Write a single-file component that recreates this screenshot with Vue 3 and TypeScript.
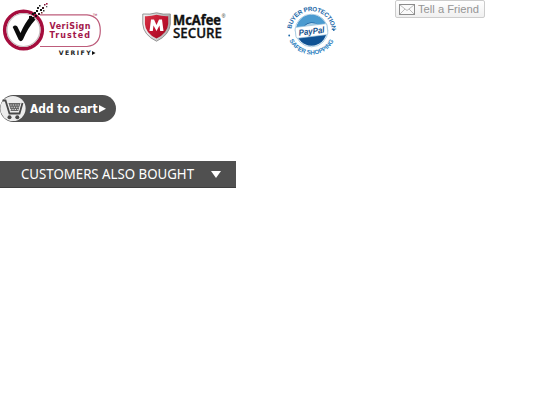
<script setup lang="ts">
const cartLabel = 'Add to cart'
const sectionTitle = 'CUSTOMERS ALSO BOUGHT'
// Pixel fragments breaking off the end of the check mark
const fragments: { x: number; y: number; s: number; c: string }[] = [
  { x: 29, y: 16, s: 3, c: '#111' },
  { x: 32, y: 13, s: 2, c: '#111' },
  { x: 35, y: 15, s: 2, c: '#111' },
  { x: 32, y: 17, s: 2.5, c: '#111' },
  { x: 34, y: 12, s: 2, c: '#111' },
  { x: 36, y: 10, s: 2, c: '#111' },
  { x: 38, y: 13, s: 2, c: '#222' },
  { x: 37, y: 7, s: 2, c: '#222' },
  { x: 40, y: 9, s: 2, c: '#111' },
  { x: 39, y: 5, s: 1.5, c: '#222' },
  { x: 42, y: 7, s: 2, c: '#3a1620' },
  { x: 43, y: 10, s: 1.5, c: '#333' },
  { x: 44, y: 4, s: 1.5, c: '#7a1435' },
  { x: 46, y: 6, s: 1.3, c: '#555' },
  { x: 46, y: 3, s: 1.6, c: '#a52048' },
  { x: 41, y: 12, s: 1.5, c: '#622' },
]
</script>

<template>
  <main class="page">
    <header class="badges">
      <svg class="verisign" width="110" height="62" viewBox="0 0 110 62">
        <path d="M40 14.800H87Q100.300 16 100.300 30.500Q100.300 45 87 46.500H40" fill="#fff" stroke="#bd5c7b" stroke-width="1.200" />
        <circle cx="23.500" cy="30" r="18.800" fill="#fff" stroke="#a50d3d" stroke-width="3.600" />
        <circle cx="23.500" cy="30" r="16.500" fill="none" stroke="#c9bfc2" stroke-width="1.200" />
        <path d="M12.700 27Q15 24.500 17.300 26.500L20.500 33Q24.500 23.500 30 17L35.500 19.500Q28 27.500 23 39.500Q21 42.500 18.800 40Z" fill="#0b0b0b" />
        <rect v-for="(f, i) in fragments" :key="i" :x="f.x" :y="f.y" :width="f.s" :height="f.s" :fill="f.c" />
        <text class="vs" x="49.500" y="29.300" textLength="41">VeriSign</text>
        <text class="vs" x="49.500" y="38.300" textLength="40.500">Trusted</text>
        <text class="tm" x="92.500" y="17">™</text>
        <text class="verify" x="58.700" y="55.300" textLength="32">VERIFY</text>
        <path d="M92 51L95.500 53L92 55Z" fill="#111" />
      </svg>

      <svg class="mcafee" width="90" height="50" viewBox="0 0 90 50">
        <defs>
          <linearGradient id="shield" x1="0" y1="0" x2="1" y2="1">
            <stop offset="0" stop-color="#d83445" />
            <stop offset=".5" stop-color="#c01430" />
            <stop offset="1" stop-color="#a00b20" />
          </linearGradient>
          <linearGradient id="rim" x1="0" y1="0" x2="1" y2="0">
            <stop offset="0" stop-color="#f4f4f4" />
            <stop offset="1" stop-color="#aaa" />
          </linearGradient>
        </defs>
        <path d="M.8 14Q8 14.800 14.500 12.800Q21 14.800 28.300 14V24Q27.500 35 14.500 41.200Q1.500 35 .8 24Z" fill="url(#rim)" stroke="#8a8a8a" stroke-width=".9" />
        <path d="M2.900 16.200Q9 16.500 14.500 14.800Q20 16.500 26.200 16.200V24Q25.500 33.300 14.500 38.500Q3.500 33.300 2.900 24Z" fill="url(#shield)" />
        <path d="M7.500 31L9 19.500H12L14.500 25L17 19.500H20L21.500 31H18.200L17.500 25.500L14.500 31L11.500 25.500L10.800 31Z" fill="#fff" />
        <text class="mc" x="31" y="24.500" textLength="48" lengthAdjust="spacingAndGlyphs">McAfee</text>
        <text class="reg" x="79.800" y="18">®</text>
        <text class="secure" x="31" y="37.800" textLength="49" lengthAdjust="spacingAndGlyphs">SECURE</text>
      </svg>

      <svg class="paypal" width="60" height="60" viewBox="0 0 60 60">
        <defs>
          <path id="upper" d="M5.300 30A20.300 20.300 0 0 1 45.800 30" />
          <path id="lower" d="M3 39.500A24.700 24.700 0 0 0 48.500 39.500" />
        </defs>
        <circle cx="25.500" cy="30.500" r="16.300" fill="#fff" stroke="#8fbcd9" stroke-width=".8" />
        <circle cx="25.500" cy="30.500" r="15.200" fill="#0f5294" />
        <path d="M10.300 31A15.200 15.200 0 0 1 40.700 29L34 28A9 9 0 0 0 17 29Z" fill="#4b9bd0" />
        <path d="M18 27A9 8 0 0 1 33 26Z" fill="#a9d1ea" />
        <g transform="rotate(-7 25.500 31)">
          <rect x="9.500" y="25.500" width="32" height="11" rx="1.500" fill="#fff" stroke="#8fbcd9" stroke-width=".6" />
          <text class="pp" x="12.500" y="34.200" textLength="26" lengthAdjust="spacingAndGlyphs">PayPal</text>
        </g>
        <text class="arc"><textPath href="#upper" startOffset="1" textLength="60">BUYER PROTECTION</textPath></text>
        <text class="arc low"><textPath href="#lower" startOffset="1" textLength="55">SAFER SHOPPING</textPath></text>
        <circle cx="3.200" cy="35.500" r=".9" fill="#1c68a8" />
        <circle cx="47.800" cy="30" r=".9" fill="#1c68a8" />
      </svg>

      <button class="friend" type="button">
        <svg width="16" height="11" viewBox="0 0 16 11">
          <rect x=".5" y=".5" width="15" height="10" fill="#fafafa" stroke="#8c8c8c" />
          <path d="M1 1L8 6.500L15 1M1 10L6 5M15 10L10 5" fill="none" stroke="#aaa" stroke-width=".8" />
        </svg>
        <svg class="friend-label" width="63" height="16">
          <text x="0" y="12" textLength="61" lengthAdjust="spacingAndGlyphs">Tell a Friend</text>
        </svg>
      </button>
    </header>

    <button class="cart" type="button">
      <svg width="116" height="27" viewBox="0 0 116 27">
        <circle cx="13" cy="13.500" r="12.600" fill="#ececec" />
        <path d="M2.500 5.500H5.500L9.500 18.500H19.500L22.500 8" fill="none" stroke="#484848" stroke-width="1.800" />
        <path d="M8.500 8H20.500L18.300 16H10.800Z" fill="#666" />
        <path d="M8 10H21M9 12.300H20.500M10 14.500H20" stroke="#ececec" stroke-width=".9" stroke-dasharray="1.200 1.200" />
        <circle cx="9.500" cy="22.300" r="2" fill="#484848" />
        <circle cx="17.300" cy="22.300" r="2" fill="#484848" />
        <text x="30" y="17.800" textLength="67.500" lengthAdjust="spacingAndGlyphs">{{ cartLabel }}</text>
        <path d="M99 10L106 13.700L99 17.500Z" fill="#fff" />
      </svg>
    </button>

    <section class="bought">
      <svg width="236" height="26" viewBox="0 0 236 26">
        <text x="21" y="17.800" textLength="173" lengthAdjust="spacingAndGlyphs">{{ sectionTitle }}</text>
        <path d="M211 10H221L216 17Z" fill="#fff" />
      </svg>
    </section>
  </main>
</template>

<style>
body {
  background: #fff;
}
</style>

<style scoped>
.page {
  display: flex;
  flex-direction: column;
  align-items: flex-start;
  font-family: "Liberation Sans", sans-serif;
}
svg {
  display: block;
}
.badges {
  display: grid;
  grid-template-columns: 142px 144px 109px 90px;
  align-items: start;
  height: 95px;
}
.vs {
  font: bold 8px "DejaVu Sans", sans-serif;
  fill: #a3174a;
}
.tm {
  font-size: 5px;
  fill: #a81e4a;
}
.verify {
  font: bold 6.2px "DejaVu Sans", sans-serif;
  fill: #222;
}
.mc {
  font: bold 13.5px "Open Sans", sans-serif;
  fill: #111;
  stroke: #111;
  stroke-width: 0.4px;
}
.reg {
  font-size: 5px;
  fill: #222;
}
.secure {
  font: 600 13.5px "Open Sans", sans-serif;
  fill: #111;
  stroke: #111;
  stroke-width: 0.3px;
}
.pp {
  font: italic bold 8.6px "Liberation Sans", sans-serif;
  fill: #12508c;
}
.arc {
  font: bold 6.2px "Liberation Sans", sans-serif;
  fill: #1c68a8;
}
.low {
  fill: #2c80c0;
}
.friend {
  display: flex;
  align-items: center;
  gap: 3px;
  box-sizing: border-box;
  width: 90px;
  height: 18px;
  padding: 0 3px;
  border: 1px solid #ccc;
  border-radius: 2px;
  background: linear-gradient(#fff, #f0f0f0);
}
.friend-label text {
  font: 11px "Liberation Sans", sans-serif;
  fill: #959595;
}
.cart {
  width: 116px;
  height: 27px;
  padding: 0;
  border: 0;
  border-radius: 14px;
  background: #505050;
}
.cart text {
  font: bold 13px "DejaVu Sans Condensed", "DejaVu Sans", sans-serif;
  fill: #fff;
}
.bought {
  box-sizing: border-box;
  width: 236px;
  height: 27px;
  margin-top: 39px;
  border-bottom: 1px solid #3d3d3d;
  background: #505050;
}
.bought text {
  font: 13.5px "Noto Sans", sans-serif;
  fill: #fff;
}
</style>
